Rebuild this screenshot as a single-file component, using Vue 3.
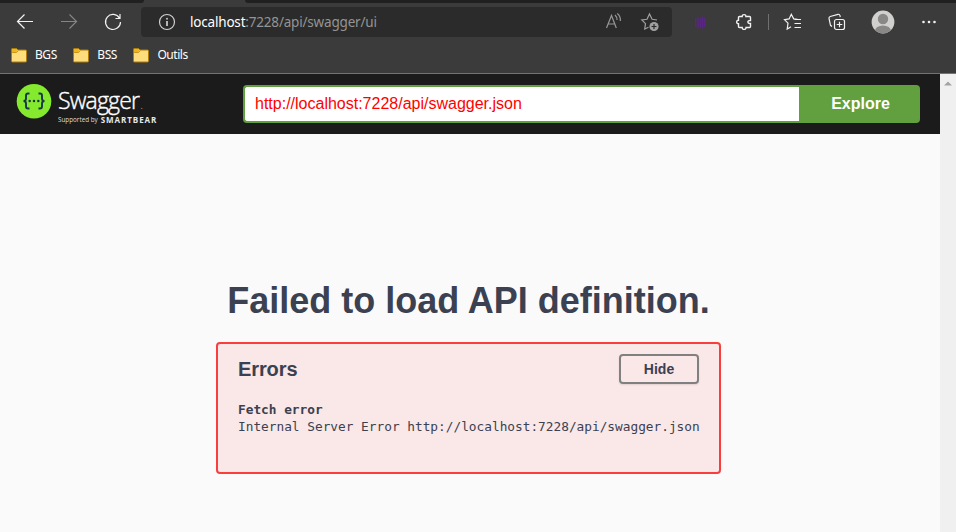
<script setup>
const bookmarks = ['BGS', 'BSS', 'Outils']
</script>

<template>
  <div class="window">
    <header class="browser">
      <div class="tabstrip"><i class="left"></i><i class="right"></i></div>
      <div class="toolbar">
        <svg class="icon back" viewBox="0 0 20 20"><path d="M18 9.500H2.500M9.500 2.500L2.500 9.500L9.500 16.500" /></svg>
        <svg class="icon forward" viewBox="0 0 20 20"><path d="M2 9.500H17.500M10.500 2.500L17.500 9.500L10.500 16.500" /></svg>
        <svg class="icon reload" viewBox="0 0 20 20"><path d="M16.500 6.200A7.500 7.500 0 1 0 17.500 10M17 2V6.500H12.500" /></svg>
        <div class="address">
          <svg class="icon info" viewBox="0 0 20 20"><circle cx="10" cy="10" r="7.500" /><path d="M10 9V14" stroke-width="1.700" /><circle cx="10" cy="6.700" r="1" class="fill" /></svg>
          <span class="url"><b>localhost</b>:7228/api/swagger/ui</span>
          <svg class="icon read" viewBox="0 0 20 20"><path d="M2.500 16L7.500 3.500L12.300 16M4.200 12H10.800M11 3Q13.200 5 13 8M13.200 1.500Q16.800 4.200 16.300 9" /></svg>
          <svg class="icon fav" viewBox="0 0 20 20"><path d="M17 8L12.100 7.300L9.500 2L7 7.300L1.800 8L5.500 11.700L4.700 17L8.500 15.200" /><circle cx="14" cy="14.500" r="4.600" class="fill" /><path class="plus" d="M11.500 14.500H16.500M14 12V17" /></svg>
        </div>
        <svg class="icon purple" viewBox="0 0 20 20"><path d="M5.700 6V15M8 5V16.500M10.300 6.500V16M12.600 4.500V16.500M14.800 6V15" /></svg>
        <svg class="icon puzzle" viewBox="0 0 20 20"><path d="M5.500 4.500H8.200C7.900 2 12.200 2 11.900 4.500H15.500Q16.500 4.500 16.500 5.500V8.500C13 7.900 13 12.100 16.500 11.500V14.500Q16.500 15.500 15.500 15.500H12C12.200 18 8 18 8.200 15.500H5.500Q4.500 15.500 4.500 14.500V11.800C2.100 12 2.100 8 4.500 8.200V5.500Q4.500 4.500 5.500 4.500Z" /></svg>
        <i class="divider"></i>
        <svg class="icon favorites" viewBox="0 0 20 20"><path d="M14.500 7.400L10.700 6.900L8.300 2.300L6.100 6.900L1.500 7.600L5 11.200L4.200 17L8 14.700M11.500 7.500H18M11.500 11.500H18M11.500 15.500H18" /></svg>
        <svg class="icon collections" viewBox="0 0 20 20"><rect x="7.500" y="7.500" width="10" height="10" rx="2" /><path d="M9.700 12.500H15.300M12.500 9.700V15.300M5 14.500L3.500 13.300L2 6.500Q1.800 5 3.200 4.500L11 2.300Q12.500 2 13 3.700L13.300 5" /></svg>
        <svg class="avatar" viewBox="0 0 24 24"><clipPath id="face"><circle cx="12" cy="12" r="11.400" /></clipPath><g clip-path="url(#face)"><path d="M0 0H24V24H0Z" fill="#d2d0ce" /><circle cx="12" cy="9" r="5.200" fill="#8a8886" /><ellipse cx="12" cy="21" rx="8" ry="5.500" fill="#8a8886" /></g></svg>
        <svg class="icon more" viewBox="0 0 20 20"><circle cx="4.500" cy="10" r="1.300" class="fill" /><circle cx="10" cy="10" r="1.300" class="fill" /><circle cx="15.500" cy="10" r="1.300" class="fill" /></svg>
      </div>
      <nav class="bookmarks">
        <span v-for="name in bookmarks" :key="name" class="bookmark">
          <svg viewBox="0 0 16 15"><path d="M.5 1.500Q.5.500 1.500.500H5.500L7 2H14.500Q15.500 2 15.500 3V13Q15.500 14 14.500 14H1.500Q.5 14 .5 13Z" fill="#ffdc7c" stroke="#ad7d08" /><path d="M1 1H5.500L6.700 2.500L5.200 4.200H1Z" fill="#efb51c" /><path d="M1 4.500H5.500L7.300 2.500" fill="none" stroke="#c9971a" /></svg>
          {{ name }}
        </span>
      </nav>
    </header>
    <div class="viewport">
      <main class="page">
        <div class="topbar">
          <div class="logo">
            <svg viewBox="0 0 36 36"><circle cx="18" cy="18.300" r="17.300" fill="#85ea2d" /><g fill="none" stroke="#173647" stroke-width="1.900"><path d="M13.500 10.500H12Q10 10.500 10 12.500V15.500Q10 18 7.500 18Q10 18 10 20.500V23.500Q10 25.500 12 25.500H13.500M22.500 10.500H24Q26 10.500 26 12.500V15.500Q26 18 28.500 18Q26 18 26 20.500V23.500Q26 25.500 24 25.500H22.500" /></g><g fill="#173647"><circle cx="13.700" cy="18" r="1.250" /><circle cx="18" cy="18" r="1.250" /><circle cx="22.300" cy="18" r="1.250" /></g></svg>
            <div class="wordmark">
              <div class="name">Swagger<small>.</small></div>
              <div class="support"><span>Supported by</span><b>SMARTBEAR</b></div>
            </div>
          </div>
          <form class="search" @submit.prevent>
            <div class="field">http://localhost:7228/api/swagger.json</div>
            <button class="explore">Explore</button>
          </form>
        </div>
        <section class="failure">
          <h1>Failed to load API definition.</h1>
          <div class="errors">
            <div class="errors-head"><h4>Errors</h4><button class="hide">Hide</button></div>
            <div class="detail"><b>Fetch error</b><span>Internal Server Error http://localhost:7228/api/swagger.json</span></div>
          </div>
        </section>
      </main>
      <aside class="scrollbar"><svg viewBox="0 0 8 5"><path d="M0 4.500L4 .5L8 4.500Z" fill="#a3a3a3" /></svg></aside>
    </div>
  </div>
</template>

<style>
body { margin: 0; overflow: hidden; }
</style>

<style scoped>
* { box-sizing: border-box; }
.window { width: 956px; height: 532px; display: flex; flex-direction: column; font-family: "Liberation Sans", Arial, sans-serif; color: #3b4151; overflow: hidden; }
.browser { height: 74px; flex: none; background: #3b3b3b; border-bottom: 1px solid #737373; color: #fff; font-family: "Noto Sans", sans-serif; }
.tabstrip { height: 3px; display: flex; justify-content: space-between; }
.tabstrip i { background: #202020; }
.left { width: 144px; border-bottom-right-radius: 3px; }
.right { width: 711px; border-bottom-left-radius: 3px; }
.toolbar { height: 38px; display: flex; align-items: center; padding-left: 15px; }
.icon { width: 20px; height: 20px; flex: none; fill: none; stroke: #f2f2f2; stroke-width: 1.2; color: #f2f2f2; }
.icon .fill { fill: currentColor; stroke: none; }
.forward { margin-left: 24px; stroke: #858585; }
.reload { margin-left: 24px; }
.address { width: 531px; height: 30px; margin-left: 18px; padding: 0 12px 0 16px; border-radius: 4px; background: #2b2b2b; display: flex; align-items: center; }
.info { stroke: #d0d0d0; color: #c0c0c0; }
.url { margin-left: 13px; flex: 1; font-size: 13.5px; line-height: 20px; letter-spacing: -.19px; color: #949494; white-space: nowrap; }
.url b { font-weight: 400; color: #fff; }
.read { stroke: #969696; }
.fav { margin-left: 16px; stroke: #a0a0a0; color: #a0a0a0; }
.fav .plus { stroke: #2b2b2b; }
.purple { margin-left: 18px; stroke: #582783; stroke-width: 1.5; }
.puzzle { margin-left: 24px; stroke-width: 1.4; }
.divider { width: 1px; height: 16px; margin: 0 14px 0 14px; background: #707070; }
.collections { margin-left: 24px; }
.avatar { width: 24px; height: 24px; margin-left: 24px; flex: none; }
.more { margin-left: 24px; }
.bookmarks { height: 28px; display: flex; align-items: center; padding-left: 11px; gap: 16.5px; font-size: 12px; line-height: 18px; }
.bookmark { display: flex; align-items: center; gap: 8px; letter-spacing: -.45px; }
.bookmark svg { width: 16px; height: 15px; }
.viewport { flex: 1; display: flex; min-height: 0; }
.page { width: 940px; background: #fafafa; }
.topbar { height: 60px; background: #1b1b1b; display: flex; padding: 9px 20px 0 16px; }
.logo { width: 227px; display: flex; gap: 6px; }
.logo > svg { width: 36px; height: 36px; flex: none; }
.wordmark { color: #fff; font-family: "Open Sans", sans-serif; white-space: nowrap; }
.name { height: 31px; padding-top: 3px; font-size: 23px; font-weight: 300; line-height: 28px; letter-spacing: -.8px; -webkit-text-stroke: .4px #fff; }
.name small { margin-left: 1px; font-size: 12px; color: #aaa; -webkit-text-stroke: 0; }
.support { height: 12px; display: flex; align-items: center; gap: 3px; line-height: 12px; }
.support span { font-size: 6.3px; color: #ddd; }
.support b { font-size: 8px; font-weight: 700; letter-spacing: .95px; color: #e8e8e8; }
.search { width: 677px; height: 38px; margin-top: 2px; display: flex; }
.field { width: 556px; border: 2px solid #62a03f; border-right: 0; border-radius: 4px 0 0 4px; padding: 0 10px; background: #fff; color: #f00; font-size: 16px; line-height: 34px; }
.explore { flex: 1; border: 0; padding: 0 0 0 2px; border-radius: 0 4px 4px 0; background: #62a03f; color: #fff; font: 700 16px "Liberation Sans", sans-serif; }
.failure { width: 505px; margin: 144px 0 0 216px; }
h1 { margin: 0; height: 64px; font-size: 36px; line-height: 46px; text-align: center; white-space: nowrap; }
.errors { height: 132px; padding: 10px 20px; border: 2px solid #f93e3e; border-radius: 4px; background: #fae7e7; }
.errors-head { display: flex; justify-content: space-between; align-items: center; height: 30px; }
h4 { margin: 0; font-size: 20px; line-height: 23px; letter-spacing: -.1px; }
.hide { width: 80px; height: 30px; padding: 0; border: 2px solid #808080; border-radius: 4px; background: transparent; box-shadow: 0 1px 2px rgba(0, 0, 0, .1); color: #3b4151; font: 700 14px "Liberation Sans", sans-serif; }
.detail { margin-top: 17px; display: flex; flex-direction: column; font: 12.79px/17px "DejaVu Sans Mono", monospace; white-space: nowrap; }
.scrollbar { width: 16px; background: #f0f0f0; display: flex; justify-content: center; padding-top: 7px; }
.scrollbar svg { width: 8px; height: 5px; }
</style>
